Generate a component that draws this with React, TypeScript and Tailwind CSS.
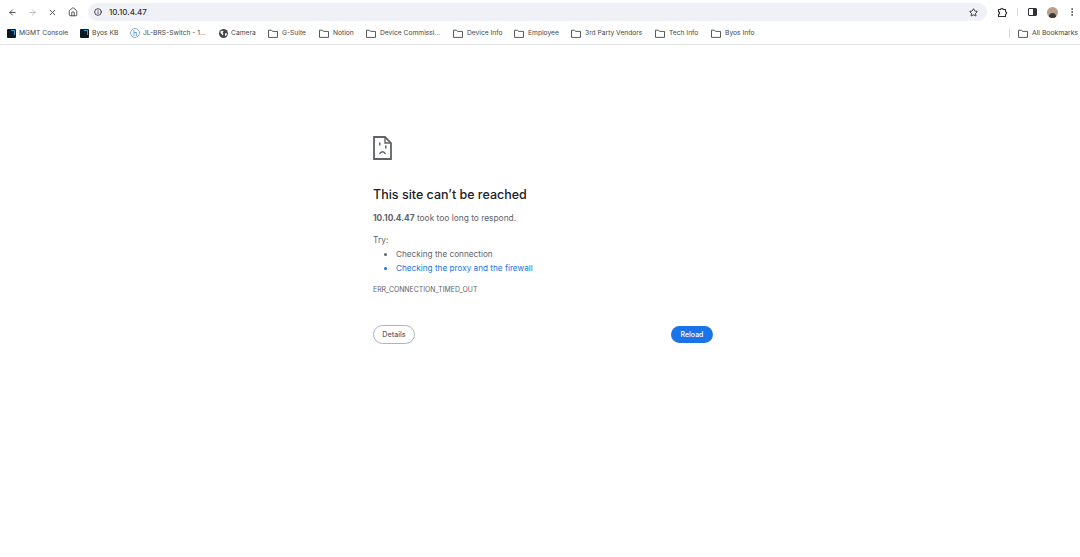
import { ArrowLeft, ArrowRight, X, Home, Info, Star, MoreVertical } from 'lucide-react'

const bookmarks = [
  { label: 'MGMT Console', kind: 'logo', width: 'w-[73px]' },
  { label: 'Byos KB', kind: 'logo', width: 'w-[50px]' },
  { label: 'JL-BRS-Switch - 1...', kind: 'h', width: 'w-[89px]' },
  { label: 'Camera', kind: 'globe', width: 'w-[49px]' },
  { label: 'G-Suite', kind: 'folder', width: 'w-[51px]' },
  { label: 'Notion', kind: 'folder', width: 'w-[47px]' },
  { label: 'Device Commissi...', kind: 'folder', width: 'w-[87px]' },
  { label: 'Device Info', kind: 'folder', width: 'w-[61px]' },
  { label: 'Employee', kind: 'folder', width: 'w-[57px]' },
  { label: '3rd Party Vendors', kind: 'folder', width: 'w-[84px]' },
  { label: 'Tech Info', kind: 'folder', width: 'w-[56px]' },
  { label: 'Byos Info', kind: 'folder', width: 'w-[50px]' },
]

function FolderIcon() {
  return (
    <svg width="10" height="9" viewBox="0 0 10 9" fill="none" className="shrink-0">
      <path d="M0.5 1.200h3l1 1.200h5v6h-9z" stroke="#45474a" strokeWidth="0.9" strokeLinejoin="round" />
    </svg>
  )
}

function GlobeIcon() {
  return (
    <svg width="9" height="9" viewBox="0 0 9 9" className="shrink-0">
      <circle cx="4.500" cy="4.500" r="4.500" fill="#45474a" />
      <path d="M1.500 2.500l2-1 1 1-1 1.200 1 1.300-.8 1.500-1-1.500-1.200-1zM6 4.500l1.500-.5.500 1.500-1.500 1.800-.5-1z" fill="#fff" />
    </svg>
  )
}

function ExtensionIcon() {
  return (
    <svg width="11" height="11" viewBox="0 0 11 11" fill="none" className="ml-[10px] shrink-0">
      <path
        d="M1.500 2.500h2.200a1.200 1.200 0 0 1 2.400 0h2.400v2.300a1.200 1.200 0 0 1 0 2.400v2.300H1.500V7.300a1.200 1.200 0 0 0 0-2.400z"
        stroke="#303134"
        strokeWidth="1.100"
        strokeLinejoin="round"
      />
    </svg>
  )
}

function BookmarkIcon({ kind }: { kind: string }) {
  if (kind === 'logo') {
    return (
      <div className="flex h-[9px] w-[9px] shrink-0 items-start justify-end rounded-[1px] bg-[#0b1a22] p-[1.5px]">
        <div className="h-[5px] w-[4px] border-t border-r border-[#2b9bd0]" />
      </div>
    )
  }
  if (kind === 'h') {
    return (
      <div className="flex h-[10px] w-[10px] shrink-0 items-center justify-center rounded-full border border-[#8da6dc] text-[7px] leading-none text-[#3c5fb0]">
        h
      </div>
    )
  }
  if (kind === 'globe') return <GlobeIcon />
  return <FolderIcon />
}

function PageIcon() {
  return (
    <svg width="19" height="24" viewBox="0 0 19 24" fill="none">
      <path d="M1 1h11l6 6v16H1z" stroke="#5f6368" strokeWidth="1.800" />
      <path d="M12 1v6h6" stroke="#5f6368" strokeWidth="1.400" />
      <rect x="6" y="6.500" width="1.500" height="3" fill="#5f6368" />
      <rect x="12" y="9.500" width="1.500" height="3" fill="#5f6368" />
      <path d="M6.500 18c.8-1.500 1.800-2.200 3-2.200s2.200.7 3 2.200" stroke="#5f6368" strokeWidth="1.400" />
    </svg>
  )
}

export default function App() {
  return (
    <div className="flex h-[557px] w-[1080px] flex-col overflow-hidden bg-white font-['Inter',sans-serif]">
      <header className="flex h-[45px] shrink-0 flex-col border-b border-[#e3e4e6]">
        <div className="flex h-6 shrink-0 items-center pl-[8px] pr-[3px]">
          <div className="flex items-center gap-[11px] text-[#45474a]">
            <ArrowLeft className="h-[9px] w-[9px]" strokeWidth={2.4} />
            <ArrowRight className="h-[9px] w-[9px] text-[#b4b6b9]" strokeWidth={2.4} />
            <X className="h-[9px] w-[9px]" strokeWidth={2.4} />
            <Home className="h-[10px] w-[10px]" strokeWidth={2.2} />
          </div>
          <div className="ml-[10px] flex h-[18px] w-[901px] items-center rounded-full bg-[#eff1f6] pl-[6px] pr-[9px]">
            <Info className="h-[8px] w-[8px] text-[#303134]" strokeWidth={2.6} />
            <span className="ml-[7px] text-[8px] font-medium text-[#303134]">10.10.4.47</span>
            <Star className="ml-auto h-[9px] w-[9px] text-[#303134]" strokeWidth={2.6} />
          </div>
          <ExtensionIcon />
          <div className="ml-[9px] h-[8px] w-px bg-[#d5d7da]" />
          <div className="ml-[10px] flex h-[8px] w-[9px] justify-end rounded-[1px] border border-[#303134]">
            <div className="w-[3px] bg-[#303134]" />
          </div>
          <div className="ml-[10px] flex h-[11px] w-[11px] items-end justify-center overflow-hidden rounded-full bg-[#b89f8c]">
            <div className="h-[5px] w-[7px] rounded-t-full bg-[#3f3833]" />
          </div>
          <MoreVertical className="ml-[9px] h-[10px] w-[10px] text-[#45474a]" strokeWidth={2.4} />
        </div>
        <div className="flex h-[19px] shrink-0 items-center pl-[7px] pr-[2px]">
          {bookmarks.map((b) => (
            <div key={b.label} className={`flex items-center gap-[3px] ${b.width}`}>
              <BookmarkIcon kind={b.kind} />
              <span className={`whitespace-nowrap text-[6.700px] text-[#45474a] ${b.kind === 'folder' ? 'ml-[1px]' : ''}`}>{b.label}</span>
            </div>
          ))}
          <div className="ml-auto h-[9px] w-px bg-[#d5d7da]" />
          <div className="ml-[8px] flex items-center gap-[4px]">
            <FolderIcon />
            <span className="whitespace-nowrap text-[6.800px] text-[#45474a]">All Bookmarks</span>
          </div>
        </div>
      </header>

      <main className="ml-[373px] w-[340px] pt-[91px]">
        <PageIcon />
        <h1 className="mt-[26px] text-[12.500px] leading-[18px] font-medium text-[#202124]">This site can’t be reached</h1>
        <p className="mt-[8px] text-[8.400px] leading-[12px] text-[#5f6368]">
          <span className="font-bold">10.10.4.47</span> took too long to respond.
        </p>
        <p className="mt-[10px] text-[8.400px] leading-[13px] text-[#5f6368]">Try:</p>
        <ul className="mt-[1px] list-disc pl-[23px] text-[8.200px] leading-[13.500px] text-[#5f6368]">
          <li>Checking the connection</li>
          <li className="text-[#1a73e8]">Checking the proxy and the firewall</li>
        </ul>
        <p className="mt-[10px] text-[6.900px] leading-[10px] text-[#5f6368]">ERR_CONNECTION_TIMED_OUT</p>
        <div className="mt-[30px] flex items-center justify-between">
          <button className="h-[19px] w-[42px] rounded-full border border-[#b0b4b8] pt-[1px] text-[7.200px] font-medium text-[#5f6368]">Details</button>
          <button className="h-[17px] w-[42px] rounded-full bg-[#1a73e8] pt-[1px] text-[7px] font-medium text-white">Reload</button>
        </div>
      </main>
    </div>
  )
}
